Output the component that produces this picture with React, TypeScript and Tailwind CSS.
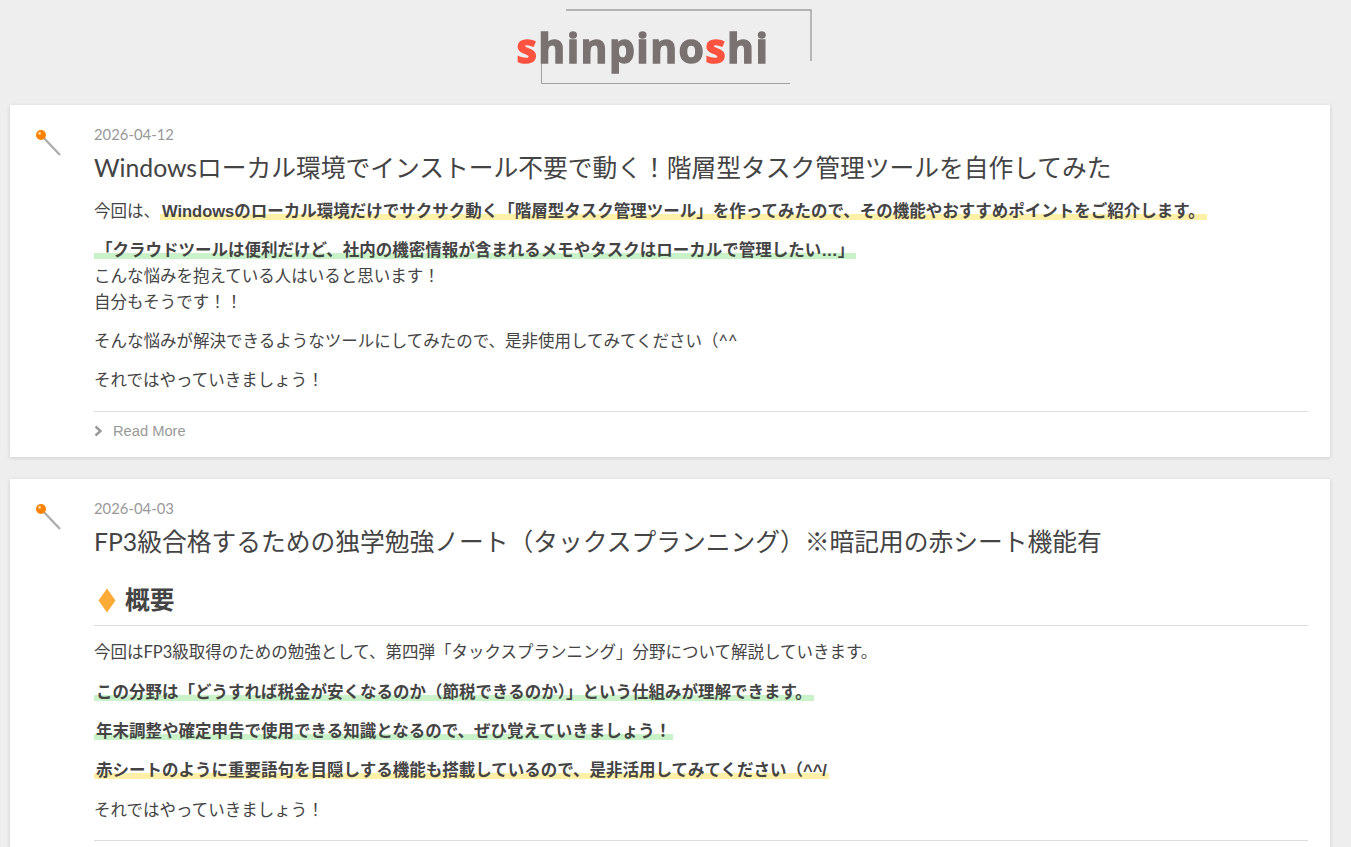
const FONT = "font-['Lato','Noto_Sans_CJK_JP',sans-serif]";

function Pin() {
  return (
    <svg width="28" height="28" viewBox="0 0 28 28" className="mt-[24px] ml-[24px] shrink-0">
      <line x1="7" y1="6" x2="26" y2="26" stroke="#adadad" strokeWidth="2.4" />
      <circle cx="7" cy="6" r="5" fill="#fb8200" />
      <circle cx="5.6" cy="4.4" r="1.3" fill="#ffd9a8" />
    </svg>
  );
}

function Yellow({ children }: { children: React.ReactNode }) {
  return <strong className="font-['Liberation_Sans','Noto_Sans_CJK_JP',sans-serif] font-bold bg-[linear-gradient(transparent_66%,#fff0a8_0%)] px-0.5">{children}</strong>;
}

function Green({ children }: { children: React.ReactNode }) {
  return <strong className="font-['Liberation_Sans','Noto_Sans_CJK_JP',sans-serif] font-bold bg-[linear-gradient(transparent_66%,#c9f2c9_0%)] px-0.5">{children}</strong>;
}

function Logo() {
  return (
    <div className="h-[105px] flex justify-center">
      <div className="relative w-[300px] h-[105px] ml-[-2px]">
        <svg width="300" height="100" viewBox="0 0 300 100" className="absolute left-0 top-0" fill="none" stroke="#a0a0a0" strokeWidth="1">
          <path d="M41 10H286V61" strokeWidth="1.4" />
          <path d="M16.5 32V83.5H265" />
        </svg>
        <div className="absolute left-[-8px] top-[19px] font-['Open_Sans',sans-serif] font-bold text-[41px] leading-[56px] text-[#7a7270] tracking-[1.4px] whitespace-nowrap [-webkit-text-stroke:1.4px_#7a7270] blur-[0.4px]">
          <span className="text-[#ff5340] [-webkit-text-stroke:1.4px_#ff5340]">s</span>hinpino<span className="text-[#ff5340] [-webkit-text-stroke:1.4px_#ff5340]">s</span>hi
        </div>
      </div>
    </div>
  );
}

export default function App() {
  return (
    <div className={`${FONT} bg-[#eeeeee] min-h-[847px] h-[847px] overflow-hidden text-[#444444] text-[16.5px] leading-[26px]`}>
      <Logo />
      <div className="pl-[10px] pr-[21px] flex flex-col gap-[22px]">
        <article className="bg-white shadow-[0_1px_4px_rgba(0,0,0,0.14)] flex">
          <Pin />
          <div className="ml-[32px] flex-1 pr-[22px] pt-[17px]">
            <div className="text-[#999999] text-[14.85px] leading-[25px]">2026-04-12</div>
            <h2 className="text-[24.75px] leading-[34px] mt-[4px]">Windowsローカル環境でインストール不要で動く！階層型タスク管理ツールを自作してみた</h2>
            <div className="mt-[13px] flex flex-col gap-[13px]">
              <p>今回は、<Yellow>Windowsのローカル環境だけでサクサク動く「階層型タスク管理ツール」を作ってみたので、その機能やおすすめポイントをご紹介します。</Yellow></p>
              <p><Green>「クラウドツールは便利だけど、社内の機密情報が含まれるメモやタスクはローカルで管理したい…」</Green><br />こんな悩みを抱えている人はいると思います！<br />自分もそうです！！</p>
              <p>そんな悩みが解決できるようなツールにしてみたので、是非使用してみてください（^^</p>
              <p>それではやっていきましょう！</p>
            </div>
            <div className="mt-[18px] border-t border-[#dddddd] h-[46px] pt-[6px] flex items-start text-[14.7px] text-[#999999]">
              <svg width="9" height="12" viewBox="0 0 9 12" fill="none" stroke="#999999" strokeWidth="2.4" className="mr-[10px] mt-[7px]"><path d="M1.5 1.5 6.5 6 1.5 10.5" /></svg>
              <span className="font-['Liberation_Sans',sans-serif]">Read More</span>
            </div>
          </div>
        </article>
        <article className="bg-white shadow-[0_1px_4px_rgba(0,0,0,0.14)] flex">
          <Pin />
          <div className="ml-[32px] flex-1 pr-[22px] pt-[17px]">
            <div className="text-[#999999] text-[14.85px] leading-[25px]">2026-04-03</div>
            <h2 className="text-[24.75px] leading-[34px] mt-[4px]">FP3級合格するための独学勉強ノート（タックスプランニング）※暗記用の赤シート機能有</h2>
            <h3 className="mt-[23px] pb-[7px] border-b border-[#dddddd] text-[24.75px] leading-[36px] font-bold flex items-center">
              <svg width="18" height="25" viewBox="0 0 18 25" className="ml-[4px] mr-[9px]"><path d="M9 0.5 17.5 12.5 9 24.5 0.5 12.5Z" fill="#fbab36" /></svg>
              概要
            </h3>
            <div className="mt-[13px] flex flex-col gap-[13px]">
              <p className="mb-[1px]">今回はFP3級取得のための勉強として、第四弾「タックスプランニング」分野について解説していきます。</p>
              <p><Green>この分野は「どうすれば税金が安くなるのか（節税できるのか）」という仕組みが理解できます。</Green></p>
              <p><Green>年末調整や確定申告で使用できる知識となるので、ぜひ覚えていきましょう！</Green></p>
              <p className="mb-[1px]"><Yellow>赤シートのように重要語句を目隠しする機能も搭載しているので、是非活用してみてください（^^/</Yellow></p>
              <p>それではやっていきましょう！</p>
            </div>
            <div className="mt-[17px] border-t border-[#dddddd] h-[46px]" />
          </div>
        </article>
      </div>
    </div>
  );
}
